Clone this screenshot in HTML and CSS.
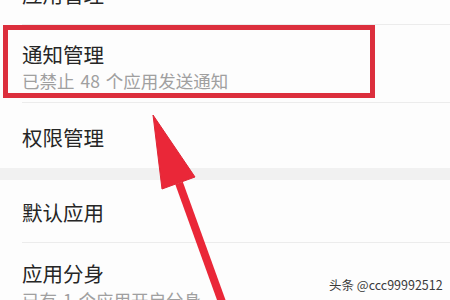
FILE: index.html
```html
<!DOCTYPE html>
<html lang="zh">
<head>
<meta charset="utf-8">
<link rel="stylesheet" href="styles.css">
</head>
<body>
<div class="screen">
  <div class="group">
    <div class="row row-top"><div class="title">应用管理</div></div>
    <div class="row row-notify">
      <div class="title">通知管理</div>
      <div class="sub">已禁止 48 个应用发送通知</div>
    </div>
    <div class="row row-perm last"><div class="title">权限管理</div></div>
  </div>
  <div class="band"></div>
  <div class="group">
    <div class="row row-default"><div class="title">默认应用</div></div>
    <div class="row row-clone last">
      <div class="title">应用分身</div>
      <div class="sub">已有 1 个应用开启分身</div>
    </div>
  </div>

  <div class="highlight"></div>
  <svg class="arrow" width="450" height="300" viewBox="0 0 450 300">
    <polygon points="153,115 162,189 195,177" fill="#ea2738" stroke="#e02636" stroke-width="1" stroke-linejoin="round"/>
    <line x1="179" y1="183" x2="222" y2="302" stroke="#ea2738" stroke-width="8"/>
  </svg>
  <div class="watermark">头条 @ccc99992512</div>
</div>
</body>
</html>
```

FILE: styles.css
```css
html, body {
  margin: 0;
  padding: 0;
}
body {
  background: #fdfdfd;
  font-family: "Noto Sans CJK SC", "Noto Sans", sans-serif;
  overflow: hidden;
}
.screen {
  position: relative;
  width: 450px;
  height: 300px;
  overflow: hidden;
}
.group {
  background: #fdfdfd;
}
.row {
  margin-left: 22px;
  border-bottom: 1px solid #ececec;
  box-sizing: border-box;
  display: flex;
  flex-direction: column;
}
.row.last {
  border-bottom: none;
}
.title {
  font-size: 20.5px;
  line-height: 22px;
  color: #262626;
}
.sub {
  font-size: 17.5px;
  line-height: 20px;
  word-spacing: 2px;
  color: #a0a0a0;
  margin-top: 6px;
}
.row-top {
  height: 25px;
}
.row-top .title {
  margin-top: -17px;
}
.row-notify {
  height: 78px;
  padding-top: 18px;
}
.row-perm {
  height: 65px;
  padding-top: 23px;
}
.band {
  height: 12px;
  background: #f1f1f1;
}
.row-default {
  height: 63px;
  padding-top: 21px;
}
.row-clone {
  height: 80px;
  padding-top: 19px;
}
.highlight {
  position: absolute;
  left: 3px;
  top: 25px;
  width: 372px;
  height: 73px;
  box-sizing: border-box;
  border: 5px solid #dc2f3d;
}
.arrow {
  position: absolute;
  left: 0;
  top: 0;
}
.watermark {
  position: absolute;
  left: 329px;
  top: 277px;
  font-size: 12.5px;
  line-height: 16px;
  color: #3a3a3a;
  text-shadow: 0 0 2px #fff, 0 0 2px #fff;
}
```
